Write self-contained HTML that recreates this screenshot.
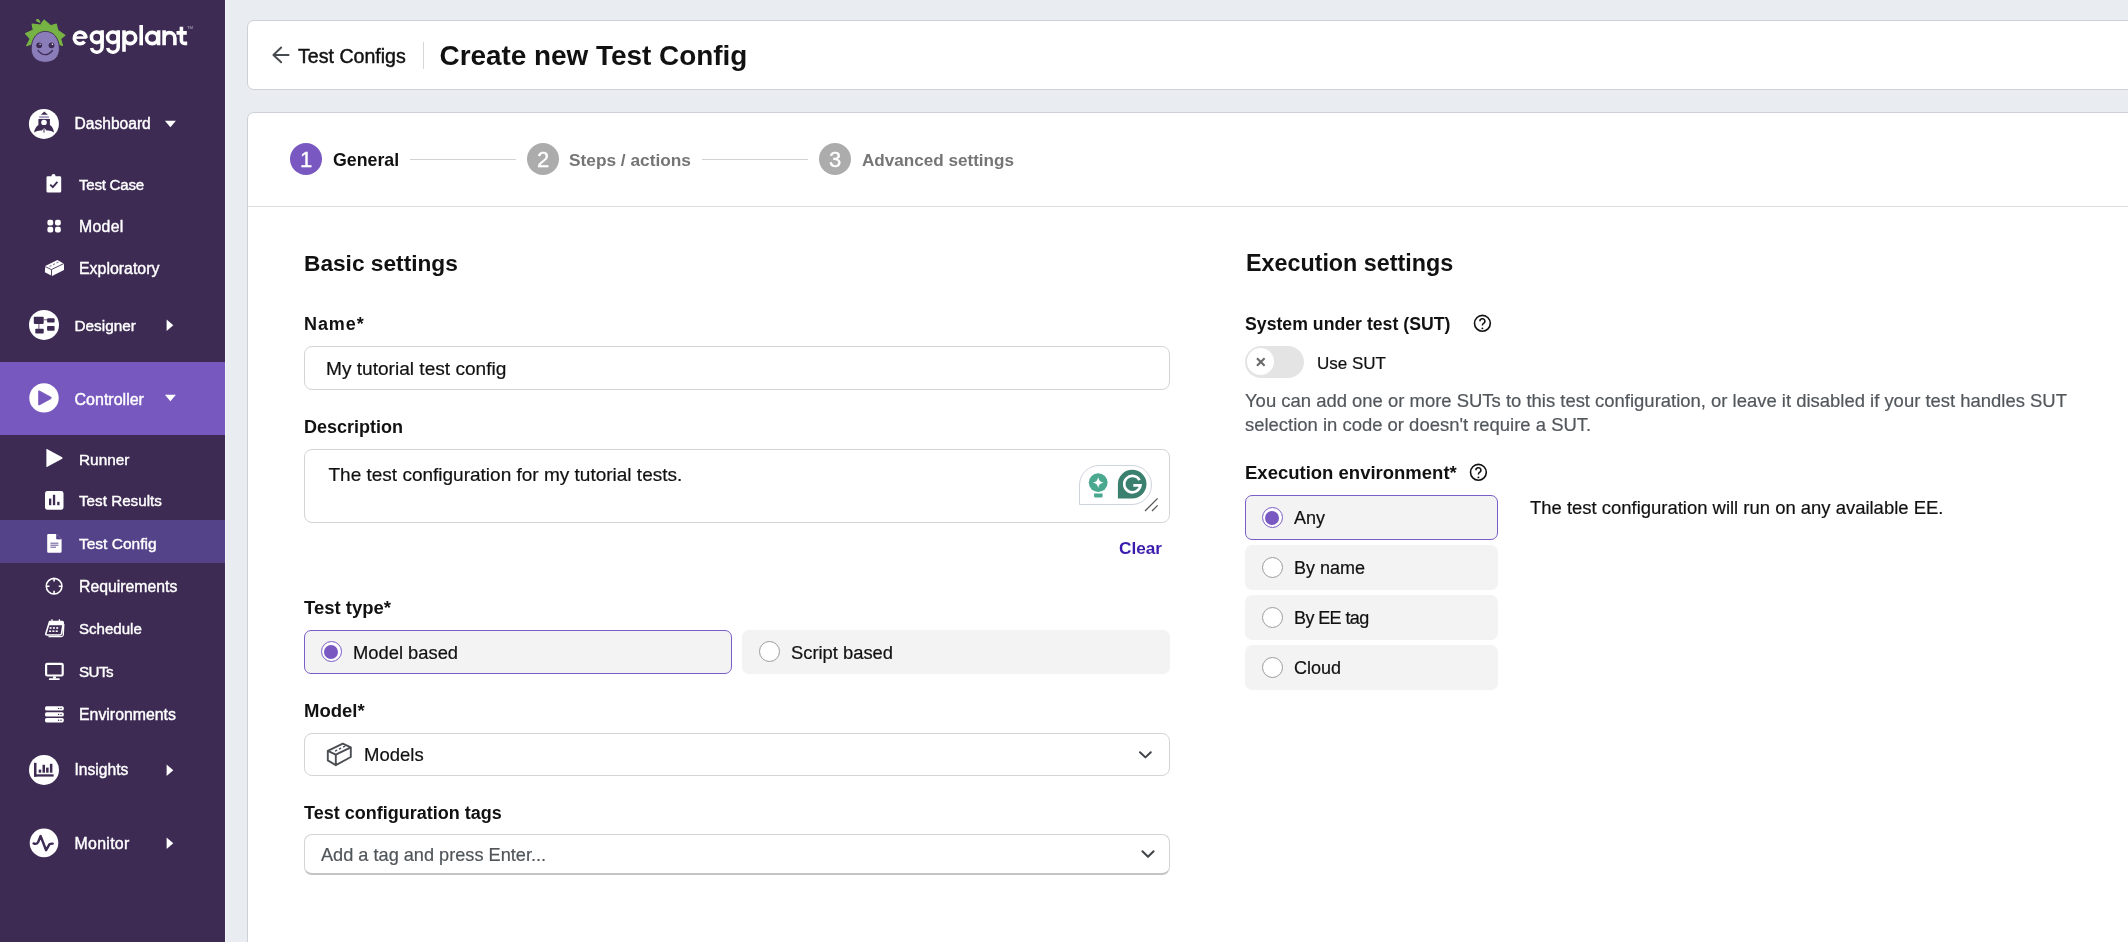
<!DOCTYPE html>
<html><head><meta charset="utf-8">
<style>
*{box-sizing:border-box;margin:0;padding:0}
html,body{width:2128px;height:942px;overflow:hidden;background:#e9ecf1;font-family:"Liberation Sans",sans-serif;color:#111}
.abs{position:absolute}
.t{position:absolute;white-space:nowrap;line-height:1}
.r{-webkit-text-stroke:0.2px}
svg{position:absolute;left:0;top:0;overflow:visible}
#side{position:absolute;left:0;top:0;width:225px;height:942px;background:#3d2b53}
#sideedge{position:absolute;left:225px;top:0;width:1px;height:942px;background:#f3f4f7}
.nav{position:absolute;color:#fff;font-weight:normal;font-size:15.5px;-webkit-text-stroke:0.4px #fff;white-space:nowrap;line-height:1}
.card{position:absolute;background:#fff;border:1px solid #cdd0d6;border-radius:7px}
.lbl{position:absolute;font-weight:bold;font-size:18px;white-space:nowrap;line-height:1;color:#111}
.box{position:absolute;border:1px solid #d4d4d4;border-radius:8px;background:#fff}
.rad{position:absolute;border-radius:7px;background:#f3f3f3}
.rb{position:absolute;width:21px;height:21px;border-radius:50%;border:1px solid #9c9c9c;background:#fff}
.rb.on{border:1.2px solid #7b5bc6}
.rb.on::after{content:"";position:absolute;left:2.4px;top:2.4px;width:14px;height:14px;border-radius:50%;background:#7a58c2}
</style></head><body><div style="position:absolute;left:0;top:0;width:2128px;height:942px;will-change:transform">
<div id="side"></div>
<div id="sideedge"></div>

<!-- cards -->
<div class="card" style="left:247px;top:20px;width:1900px;height:70px"></div>
<div class="card" style="left:247px;top:112px;width:1900px;height:900px"></div>
<div class="abs" style="left:248px;top:206px;width:1880px;height:1px;background:#dcdcdc"></div>

<!-- header content -->
<svg width="2128" height="942" style="pointer-events:none">
  <!-- back arrow -->
  <g stroke="#464b50" stroke-width="1.9" fill="none" stroke-linecap="round" stroke-linejoin="round">
    <path d="M288.6 55H273.6M281.2 47.5L273.4 55L281.2 62.3"/>
  </g>
</svg>
<div class="t" style="left:298px;top:46.5px;font-size:19.6px;-webkit-text-stroke:0.45px #111">Test Configs</div>
<div class="abs" style="left:423px;top:42px;width:1px;height:27px;background:#d6d6d6"></div>
<div class="t" style="left:439.5px;top:41.8px;font-size:27.9px;font-weight:bold">Create new Test Config</div>

<!-- stepper -->
<div class="abs" style="left:290px;top:143px;width:32px;height:32px;border-radius:50%;background:#7a58c1"></div>
<div class="t" style="left:290px;top:148.6px;width:32px;text-align:center;font-size:22px;color:#fff;-webkit-text-stroke:0.35px #fff">1</div>
<div class="t" style="left:333px;top:152px;font-size:17.75px;font-weight:bold">General</div>
<div class="abs" style="left:410px;top:159px;width:106px;height:1px;background:#d2d2d2"></div>
<div class="abs" style="left:527px;top:143px;width:32px;height:32px;border-radius:50%;background:#acacac"></div>
<div class="t" style="left:527px;top:148.6px;width:32px;text-align:center;font-size:22px;color:#fff;-webkit-text-stroke:0.35px #fff">2</div>
<div class="t" style="left:569px;top:152.2px;font-size:17.3px;font-weight:bold;color:#757575">Steps / actions</div>
<div class="abs" style="left:702px;top:159px;width:106px;height:1px;background:#d2d2d2"></div>
<div class="abs" style="left:819px;top:143px;width:32px;height:32px;border-radius:50%;background:#acacac"></div>
<div class="t" style="left:819px;top:148.6px;width:32px;text-align:center;font-size:22px;color:#fff;-webkit-text-stroke:0.35px #fff">3</div>
<div class="t" style="left:862px;top:152.2px;font-size:17.1px;font-weight:bold;color:#757575">Advanced settings</div>

<!-- left column -->
<div class="t" style="left:304px;top:252px;font-size:22.7px;font-weight:bold">Basic settings</div>
<div class="lbl" style="left:304px;top:315px;letter-spacing:0.9px">Name*</div>
<div class="box" style="left:304px;top:346px;width:866px;height:44px"></div>
<div class="t r" style="left:326px;top:359px;font-size:19.1px">My tutorial test config</div>
<div class="lbl" style="left:304px;top:417.7px">Description</div>
<div class="box" style="left:304px;top:449px;width:866px;height:74px"></div>
<div class="t r" style="left:328.5px;top:465px;font-size:19px">The test configuration for my tutorial tests.</div>
<!-- grammarly -->
<div class="abs" style="left:1079px;top:465px;width:73px;height:40px;border:1.3px solid #cfd3e0;border-radius:20px 20px 20px 0;background:#fff"></div>
<svg width="2128" height="942">
  <circle cx="1098.2" cy="482.6" r="9.4" fill="#4aa88f"/>
  <path d="M1094 493.6h8.6v2.4a1.5 1.5 0 0 1-1.5 1.5h-5.6a1.5 1.5 0 0 1-1.5-1.5z" fill="#4aa88f"/>
  <path d="M1098.2 477.2Q1099 481.8 1103.6 482.6Q1099 483.4 1098.2 488Q1097.4 483.4 1092.8 482.6Q1097.4 481.8 1098.2 477.2z" fill="#fff"/>
  <path d="M1132.2 469.8a14.3 14.3 0 1 1 0 28.6h-14.3v-14.3a14.3 14.3 0 0 1 14.3-14.3z" fill="#3b7f6f"/>
  <path d="M1139.6 480.2a8.2 8.2 0 1 0 0.9 5.2h-7.2" stroke="#fff" stroke-width="2.6" fill="none"/>
  <path d="M1145 511L1157.6 498.4M1152 511L1157.6 505.4" stroke="#555" stroke-width="1.3"/>
</svg>
<div class="t" style="left:1119px;top:539.6px;font-size:17.2px;font-weight:bold;color:#3b1cae">Clear</div>

<div class="lbl" style="left:304px;top:599px;font-size:18.5px">Test type*</div>
<div class="rad" style="left:304px;top:630px;width:428px;height:44px;border:1.2px solid #7b5bc6"></div>
<div class="rb on" style="left:321px;top:641.3px"></div>
<div class="t r" style="left:353px;top:643.7px;font-size:18.35px">Model based</div>
<div class="rad" style="left:742px;top:630px;width:428px;height:44px"></div>
<div class="rb" style="left:759px;top:641.3px"></div>
<div class="t r" style="left:791px;top:643.7px;font-size:18.35px">Script based</div>

<div class="lbl" style="left:304px;top:702.2px;font-size:18.5px">Model*</div>
<div class="box" style="left:304px;top:733px;width:866px;height:43px"></div>
<svg width="2128" height="942">
  <g stroke="#4b4f54" stroke-width="1.9" fill="none" stroke-linejoin="round">
    <path d="M327.8 750.8L342.8 743.6L350.8 747.4L335.8 754.6Z"/>
    <path d="M327.8 750.8V760.4L335.8 765.2V754.6M350.8 747.4V757L335.8 765.2"/>
  </g>
  <path d="M335 751.2l2.2-1M339 749.2l2.2-1M343 747.2l2.2-1" stroke="#4b4f54" stroke-width="1.4"/>
  <path d="M1140 752.2L1145.4 757.4L1150.8 752.2" stroke="#3f4348" stroke-width="2" fill="none" stroke-linecap="round" stroke-linejoin="round"/>
</svg>
<div class="t r" style="left:364px;top:746px;font-size:18.5px">Models</div>

<div class="lbl" style="left:304px;top:803.7px">Test configuration tags</div>
<div class="box" style="left:304px;top:834px;width:866px;height:41px;border-bottom:2px solid #c4c4c4"></div>
<div class="t r" style="left:321px;top:845.8px;font-size:18.16px;color:#50555a">Add a tag and press Enter...</div>
<svg width="2128" height="942"><path d="M1142.4 851.2L1148 856.8L1153.6 851.2" stroke="#3f4348" stroke-width="2" fill="none" stroke-linecap="round" stroke-linejoin="round"/></svg>

<!-- right column -->
<div class="t" style="left:1246px;top:252.2px;font-size:23.3px;font-weight:bold">Execution settings</div>
<div class="lbl" style="left:1245px;top:315.8px;font-size:17.7px">System under test (SUT)</div>
<svg width="2128" height="942">
  <g stroke="#111" stroke-width="1.6" fill="none">
    <circle cx="1482.4" cy="323.3" r="7.9"/>
    <circle cx="1478.4" cy="472.3" r="7.9"/>
    <path d="M1479.9 321.3a2.5 2.5 0 1 1 3.7 2.1c-0.9 0.5-1.2 1-1.2 2" stroke-width="1.5"/>
    <path d="M1475.9 470.3a2.5 2.5 0 1 1 3.7 2.1c-0.9 0.5-1.2 1-1.2 2" stroke-width="1.5"/>
  </g>
  <circle cx="1482.4" cy="328.4" r="0.95" fill="#111"/>
  <circle cx="1478.4" cy="477.4" r="0.95" fill="#111"/>
</svg>
<div class="abs" style="left:1245px;top:346px;width:59px;height:32px;border-radius:16px;background:#e4e4e4"></div>
<div class="abs" style="left:1247.4px;top:347.8px;width:27px;height:27px;border-radius:50%;background:#fff"></div>
<svg width="2128" height="942">
  <path d="M1257 358.2L1264.6 365.8M1264.6 358.2L1257 365.8" stroke="#6a6a6a" stroke-width="2.1"/>
</svg>
<div class="t r" style="left:1317px;top:354.6px;font-size:17px">Use SUT</div>
<div class="t r" style="left:1245px;top:392px;font-size:18.47px;color:#52575c">You can add one or more SUTs to this test configuration, or leave it disabled if your test handles SUT</div>
<div class="t r" style="left:1245px;top:415.8px;font-size:18.47px;color:#52575c">selection in code or doesn't require a SUT.</div>
<div class="lbl" style="left:1245px;top:464.2px;font-size:18.5px">Execution environment*</div>

<div class="rad" style="left:1245px;top:495px;width:253px;height:45px;border:1.2px solid #7b5bc6"></div>
<div class="rb on" style="left:1262px;top:507.2px"></div>
<div class="t r" style="left:1294px;top:508.7px;font-size:18px">Any</div>
<div class="rad" style="left:1245px;top:545.4px;width:253px;height:44.6px"></div>
<div class="rb" style="left:1262px;top:556.8px"></div>
<div class="t r" style="left:1294px;top:558.9px;font-size:18px">By name</div>
<div class="rad" style="left:1245px;top:595.4px;width:253px;height:44.6px"></div>
<div class="rb" style="left:1262px;top:606.8px"></div>
<div class="t r" style="left:1294px;top:608.7px;font-size:18px;letter-spacing:-0.6px">By EE tag</div>
<div class="rad" style="left:1245px;top:645.4px;width:253px;height:44.6px"></div>
<div class="rb" style="left:1262px;top:656.8px"></div>
<div class="t r" style="left:1294px;top:658.9px;font-size:18px">Cloud</div>
<div class="t r" style="left:1530px;top:499.2px;font-size:18.45px">The test configuration will run on any available EE.</div>

<!-- sidebar highlights -->
<div class="abs" style="left:0;top:362px;width:225px;height:73px;background:#7758bf"></div>
<div class="abs" style="left:0;top:520px;width:225px;height:43px;background:#55438a"></div>

<!-- sidebar icons -->
<svg width="226" height="942">
  <!-- logo body -->
  <path d="M36.1 19.6C37 18.6 38.8 19 39.6 20.4C40.4 21.6 40.6 22.6 40.2 23Q38 22.4 36.4 21.2C35.8 20.6 35.7 20.1 36.1 19.6Z" fill="#77b244"/>
  <path d="M25.6 33.6L33.4 30.2L32.2 24.2L40.6 25.2L44.1 20.2L50.6 25.8L56.2 24.2L57.8 30.6L64.8 35.3L60.6 38.8L62.4 45.4L58 43.6L45 37L32 43.6L26.8 45.6L30.3 38.8Z" fill="#77b244" stroke="#77b244" stroke-width="1.3" stroke-linejoin="round"/>
  <path d="M45.3 31.4C37 31.4 31.8 38 31.2 48C30.8 57 36.6 62.3 45.2 62.3C53.8 62.3 59.8 57 59.4 48C58.8 38 53.6 31.4 45.3 31.4Z" fill="#8b7db9" stroke="#3d2b53" stroke-width="0.9"/>
  <circle cx="39.2" cy="45.3" r="2.9" fill="#3d2b53"/>
  <circle cx="51.5" cy="45.3" r="2.9" fill="#3d2b53"/>
  <circle cx="40.1" cy="44.3" r="0.8" fill="#cfc8e0"/>
  <circle cx="52.4" cy="44.3" r="0.8" fill="#fff"/>
  <path d="M37.9 50.3Q45.2 59 52.5 50.5" stroke="#3d2b53" stroke-width="1.2" fill="none" stroke-linecap="round"/>
  <!-- logo text -->
  <g stroke="#fff" stroke-width="3.6" fill="none">
    <path d="M85.9 37.9A5.8 5.8 0 1 0 84.6 41.6"/><path d="M74.6 37.6H86.6" stroke-width="2.5"/>
    <circle cx="96.75" cy="37.3" r="5.35"/>
    <path d="M102.1 30.2V47.2A5.3 5.2 0 0 1 91.6 48"/>
    <circle cx="112.9" cy="37.3" r="5.35"/>
    <path d="M118.2 30.2V47.2A5.3 5.2 0 0 1 107.7 48"/>
    <path d="M124 30.3V51.8"/>
    <circle cx="130.1" cy="38" r="5.6"/>
    <path d="M141.2 25V45.3"/>
    <circle cx="152.2" cy="38" r="5.6"/>
    <path d="M158.6 30.3V45.3"/>
    <path d="M164.1 30.3V45.3M164.1 38A5.4 5.4 0 0 1 174.9 38V45.3"/>
    <path d="M181.4 26.7V40.4A3 3 0 0 0 184.4 43.4H187.2M176.5 32.9H186.8"/>
  </g>
  <text x="187" y="29" font-size="4.2" fill="#b9b2c8" font-family="Liberation Sans">TM</text>

  <!-- Dashboard rocket -->
  <circle cx="43.9" cy="123.9" r="15" fill="#fff"/>
  <path d="M44.3 111.6L47.8 114.7H40.8Z" fill="#3d2b53"/>
  <rect x="39.1" y="116.1" width="9.8" height="2.1" fill="#a99ec4"/>
  <rect x="38.4" y="119" width="11.5" height="6" fill="#3d2b53"/>
  <circle cx="44" cy="122.6" r="2.8" fill="#fff"/>
  <path d="M34 132.6C34.8 128.6 36.4 126 38.6 125L49.8 125C52 126 53.4 128.6 54 132.6C51.8 131 49.2 130.2 46.6 130.6L44.2 128L41.8 130.6C39.2 130.2 36.4 131 34 132.6Z" fill="#3d2b53"/>
  <path d="M44 128.2V132.6" stroke="#3d2b53" stroke-width="1"/>

  <!-- Test Case clipboard -->
  <path d="M47.8 176.2H51.4A2.1 2.1 0 0 1 55.6 176.2H59.9A1.3 1.3 0 0 1 61.2 177.5V191.3A1.3 1.3 0 0 1 59.9 192.6H47.8A1.3 1.3 0 0 1 46.5 191.3V177.5A1.3 1.3 0 0 1 47.8 176.2Z" fill="#fff"/>
  <path d="M50.2 184.6L52.8 187.1L57.4 181.8" stroke="#3d2b53" stroke-width="1.8" fill="none"/>
  <!-- Model dots -->
  <rect x="47.4" y="219.7" width="5.8" height="5.8" rx="2" fill="#fff"/>
  <rect x="55" y="219.7" width="5.8" height="5.8" rx="2" fill="#fff"/>
  <rect x="47.4" y="226.8" width="5.8" height="5.8" rx="2" fill="#fff"/>
  <rect x="55" y="226.8" width="5.8" height="5.8" rx="2" fill="#fff"/>
  <!-- Exploratory brick -->
  <path d="M45.2 266.1L57.4 260L64 263.8V270.1L52.1 276L44.9 272.2Z" fill="#fff"/>
  <path d="M45.2 266.6L51.4 269.6L63.8 263.6M51.5 269.8V276" stroke="#3d2b53" stroke-width="0.9" fill="none"/>
  <path d="M49.5 266.6l2-1M53 264.8l2-1M56.5 263l2-1" stroke="#8d80a8" stroke-width="1.1"/>

  <!-- Designer -->
  <circle cx="44" cy="324.9" r="15" fill="#fff"/>
  <g fill="#3d2b53">
    <rect x="33.8" y="316.7" width="9.9" height="7.2" rx="0.8"/>
    <rect x="47.1" y="318.2" width="7.5" height="4.4" rx="0.8"/>
    <rect x="35.3" y="328.8" width="8.4" height="4.7" rx="0.8"/>
    <rect x="47.1" y="326" width="7.5" height="4.7" rx="0.8"/>
  </g>
  <path d="M43.7 319.8H47.1M38.9 323.9V328.8" stroke="#3d2b53" stroke-width="0.8"/>

  <!-- Controller -->
  <circle cx="44" cy="397.9" r="14.7" fill="#fff"/>
  <path d="M38.6 391.6Q38.3 390.5 39.4 390.9L51 397.2Q51.9 397.9 51 398.6L39.4 404.9Q38.3 405.3 38.6 404.2Z" fill="#7758bf" stroke="#7758bf" stroke-width="0.8" stroke-linejoin="round"/>

  <!-- Runner -->
  <path d="M46.4 449.6Q45.9 448.7 46.9 449.1L62.2 457.3Q63 458 62.2 458.7L46.9 466.9Q45.9 467.3 46.4 466.4Z" fill="#fff"/>
  <!-- Test Results -->
  <rect x="45" y="491" width="18.5" height="18.8" rx="2.4" fill="#fff"/>
  <g fill="#3d2b53">
    <rect x="49" y="498.6" width="2.3" height="6.6"/>
    <rect x="52.9" y="494.8" width="2.3" height="10.4"/>
    <rect x="57.2" y="501.8" width="2.3" height="3.4"/>
  </g>
  <!-- Test Config doc -->
  <path d="M48.4 534H56.6L61.6 539V551.5A1.2 1.2 0 0 1 60.4 552.7H48.4A1.2 1.2 0 0 1 47.2 551.5V535.2A1.2 1.2 0 0 1 48.4 534Z" fill="#fff"/>
  <path d="M56.6 534V539H61.6" fill="#55438a" stroke="#55438a" stroke-width="0.7"/>
  <path d="M50.4 543.2H58.4M50.4 545.2H58.4M50.4 547.2H56" stroke="#55438a" stroke-width="0.9"/>
  <!-- Requirements -->
  <circle cx="54.1" cy="586.2" r="7.8" stroke="#fff" stroke-width="1.6" fill="none"/>
  <path d="M54.1 578.4V581.6M54.1 590.8V594M46.3 586.2H49.5M58.7 586.2H61.9" stroke="#fff" stroke-width="1.6"/>
  <!-- Schedule -->
  <path d="M49.6 621.6H62.2Q63.4 621.6 63.2 622.8L61.6 633.4Q61.2 635 59.6 635H47Q45.4 635 45.9 633.4Z" fill="none" stroke="#fff" stroke-width="1.6" stroke-linejoin="round"/>
  <path d="M49.6 621.6H62.2Q63.4 621.6 63.2 622.8L62.8 625.2H48.9Z" fill="#fff"/>
  <path d="M48.5 636.6H61.3Q63 636.6 63.3 635L63.8 624" fill="none" stroke="#fff" stroke-width="1.3"/>
  <path d="M52 619.2V622.6M59.4 619.2V622.6" stroke="#fff" stroke-width="1.3"/>
  <g fill="#fff">
    <rect x="49.6" y="627.2" width="2" height="1.6"/><rect x="52.9" y="627.2" width="2" height="1.6"/><rect x="56.2" y="627.2" width="2" height="1.6"/>
    <rect x="49.1" y="630.4" width="2" height="1.6"/><rect x="52.4" y="630.4" width="2" height="1.6"/><rect x="55.7" y="630.4" width="2" height="1.6"/>
  </g>
  <!-- SUTs -->
  <rect x="46.1" y="663.9" width="16.6" height="11.6" rx="1.2" stroke="#fff" stroke-width="2.2" fill="none"/>
  <rect x="53" y="676.4" width="3" height="2.2" fill="#fff"/>
  <rect x="48.9" y="678.3" width="10.8" height="1.7" rx="0.6" fill="#fff"/>
  <!-- Environments -->
  <g fill="#fff">
    <rect x="45" y="706.2" width="18.8" height="4.4" rx="1.6"/>
    <rect x="45" y="712.2" width="18.8" height="4.4" rx="1.6"/>
    <rect x="45" y="718" width="18.8" height="4.4" rx="1.6"/>
  </g>
  <g fill="#3d2b53">
    <circle cx="58.6" cy="708.4" r="0.7"/><circle cx="61" cy="708.4" r="0.7"/>
    <circle cx="58.6" cy="714.4" r="0.7"/><circle cx="61" cy="714.4" r="0.7"/>
    <circle cx="58.6" cy="720.2" r="0.7"/><circle cx="61" cy="720.2" r="0.7"/>
  </g>
  <!-- Insights -->
  <circle cx="44" cy="769.9" r="15" fill="#fff"/>
  <g fill="#3d2b53">
    <rect x="34" y="762.8" width="2.5" height="13.9"/>
    <rect x="34" y="774.3" width="19.6" height="2.3"/>
    <rect x="38.7" y="769.6" width="2.5" height="3.1"/>
    <rect x="42.5" y="764.8" width="2.5" height="7.9"/>
    <rect x="46.1" y="767.6" width="2.5" height="5.1"/>
    <rect x="49.9" y="763.8" width="2.5" height="8.9"/>
  </g>
  <!-- Monitor -->
  <circle cx="44" cy="842.9" r="14.3" fill="#fff"/>
  <path d="M33.6 843.4Q36.6 844.8 38.2 842L40.6 836L46.1 850.2L49.6 844.2Q50.2 843.6 52.7 843.6" stroke="#3d2b53" stroke-width="2.4" fill="none" stroke-linejoin="round" stroke-linecap="round"/>

  <!-- carets -->
  <path d="M164.9 120.8H175.9L170.4 127.2Z" fill="#fff"/>
  <path d="M164.9 394.8H175.9L170.4 401.2Z" fill="#fff"/>
  <path d="M166.6 319.6V331L173.3 325.3Z" fill="#fff"/>
  <path d="M166.6 764.6V776L173.3 770.3Z" fill="#fff"/>
  <path d="M166.6 837.6V849L173.3 843.3Z" fill="#fff"/>
</svg>

<!-- sidebar nav text -->
<div class="nav" style="left:74.5px;top:116.29px;font-size:15.6px">Dashboard</div>
<div class="nav" style="left:79px;top:176.72px;font-size:15.1px;letter-spacing:-0.25px">Test Case</div>
<div class="nav" style="left:79px;top:219.03px;font-size:15.8px;letter-spacing:0.3px">Model</div>
<div class="nav" style="left:79px;top:261.04px;font-size:15.9px">Exploratory</div>
<div class="nav" style="left:74.5px;top:317.62px;font-size:15.33px">Designer</div>
<div class="nav" style="left:74.5px;top:390.93px;font-size:16.03px">Controller</div>
<div class="nav" style="left:79px;top:451.68px;font-size:15.38px">Runner</div>
<div class="nav" style="left:79px;top:492.81px;font-size:15.23px">Test Results</div>
<div class="nav" style="left:79px;top:536.48px;font-size:15.5px">Test Config</div>
<div class="nav" style="left:79px;top:579.42px;font-size:15.81px">Requirements</div>
<div class="nav" style="left:79px;top:621.24px;font-size:15.07px">Schedule</div>
<div class="nav" style="left:79px;top:663.93px;font-size:15.2px;letter-spacing:-0.6px">SUTs</div>
<div class="nav" style="left:79px;top:706.97px;font-size:15.86px">Environments</div>
<div class="nav" style="left:74.5px;top:762.25px;font-size:15.65px">Insights</div>
<div class="nav" style="left:74.5px;top:835.94px;font-size:15.9px;letter-spacing:0.3px">Monitor</div>
</div></body></html>
